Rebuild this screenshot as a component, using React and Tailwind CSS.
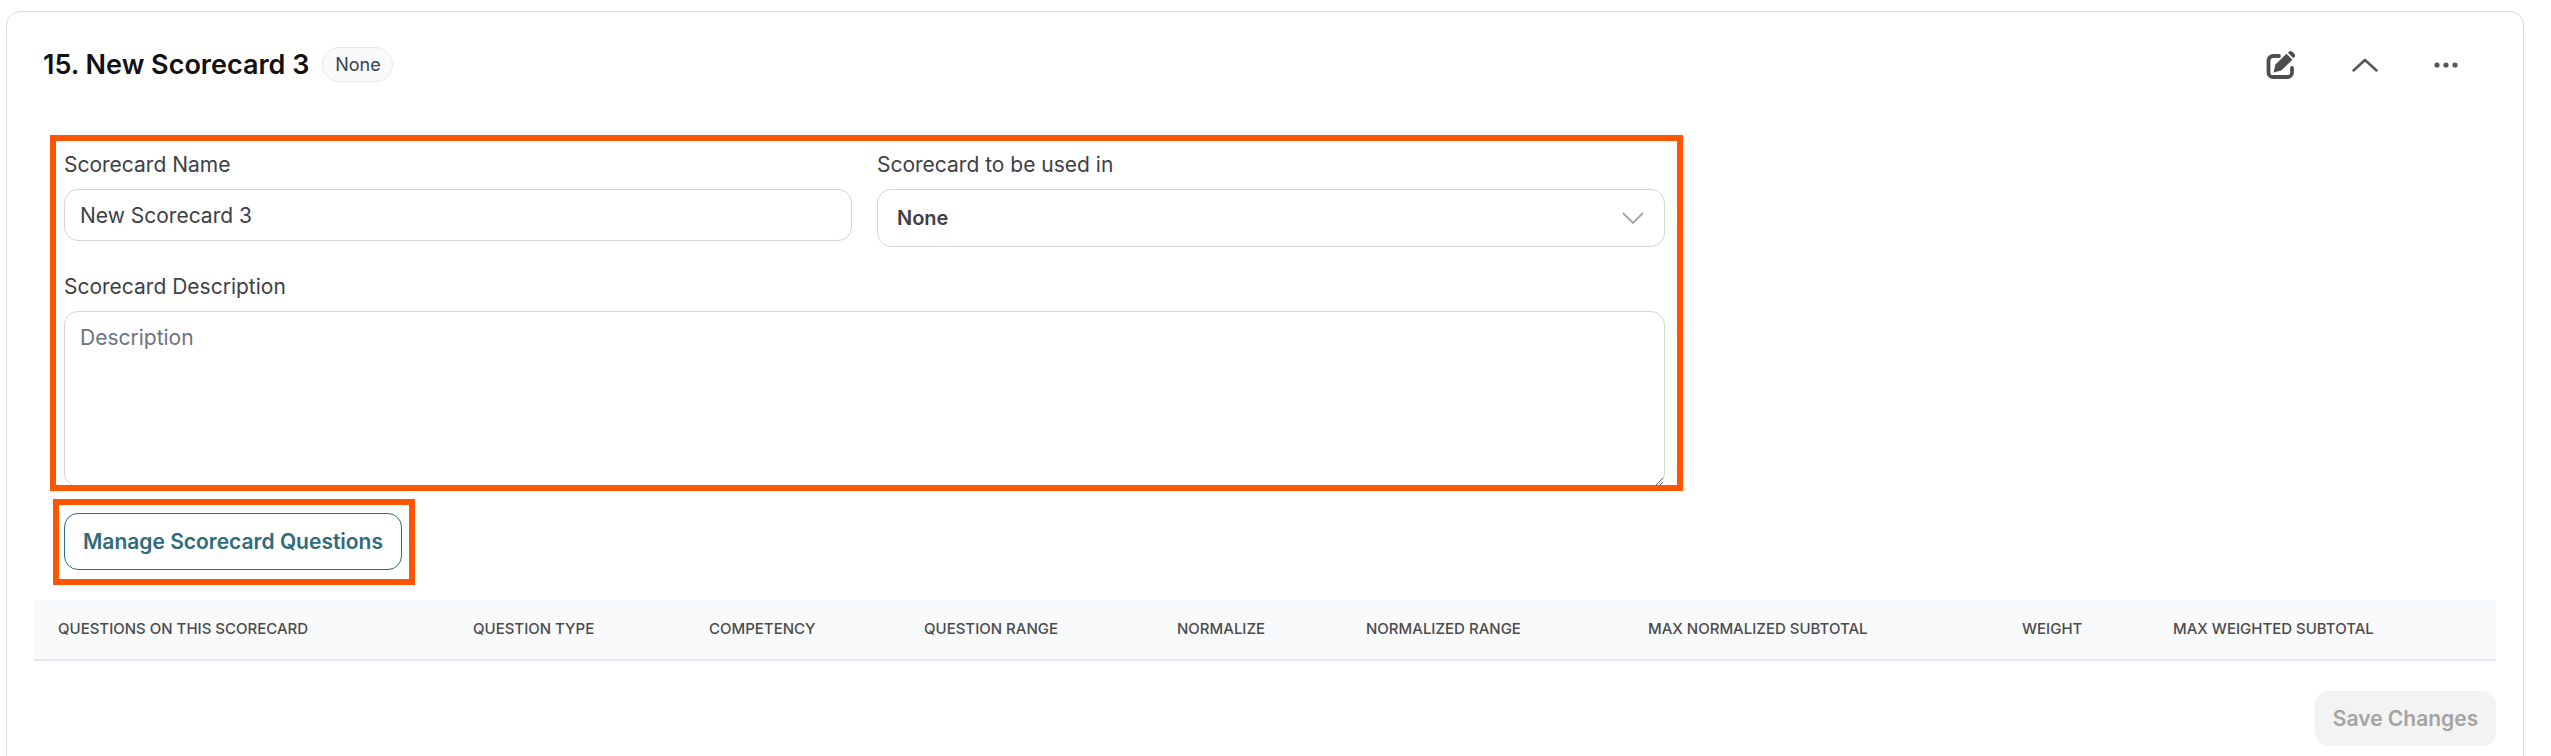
const columns = [
  { label: "Questions on this scorecard", width: "w-[415px]" },
  { label: "Question type", width: "w-[236px]" },
  { label: "Competency", width: "w-[215px]" },
  { label: "Question range", width: "w-[253px]" },
  { label: "Normalize", width: "w-[189px]" },
  { label: "Normalized range", width: "w-[282px]" },
  { label: "Max normalized subtotal", width: "w-[374px]" },
  { label: "Weight", width: "w-[151px]" },
  { label: "Max weighted subtotal", width: "w-[347px]" },
];

const EditIcon = () => (
  <svg viewBox="0 0 30 30" className="w-[30px] h-[30px] text-[#4d4d4d]">
    <path
      d="M13 6H7a4.5 4.5 0 0 0-4.5 4.5V22.5A4.5 4.5 0 0 0 7 27H21.5a4.5 4.5 0 0 0 4.5-4.5V18"
      fill="none"
      stroke="currentColor"
      strokeWidth="3.8"
      strokeLinecap="round"
    />
    <path d="M7.6 22.4L9.4 14.6L20.5 3.8L26.4 9.7L15.3 20.6Z" fill="currentColor" />
    <path
      d="M22 2.8L23.2 1.6a2 2 0 0 1 2.8 0l2.5 2.5a2 2 0 0 1 0 2.8L27.4 8.2Z"
      fill="currentColor"
    />
  </svg>
);

const ChevronUp = () => (
  <svg viewBox="0 0 26 14" className="w-[26px] h-[14px] text-[#555555]">
    <path
      d="M1.5 12.5L13 2L24.5 12.5"
      fill="none"
      stroke="currentColor"
      strokeWidth="2.5"
      strokeLinecap="round"
      strokeLinejoin="round"
    />
  </svg>
);

const Dots = () => (
  <svg viewBox="0 0 24 6" className="w-[24px] h-[6px] text-[#555555]">
    <circle cx="3" cy="3" r="2.6" fill="currentColor" />
    <circle cx="12" cy="3" r="2.6" fill="currentColor" />
    <circle cx="21" cy="3" r="2.6" fill="currentColor" />
  </svg>
);

const SelectChevron = () => (
  <svg viewBox="0 0 22 12" className="w-[22px] h-[12px] text-[#a3a3a3]">
    <path d="M1 1L11 11L21 1" fill="none" stroke="currentColor" strokeWidth="1.8" />
  </svg>
);

const App = () => {
  return (
    <div className="h-[756px] overflow-hidden bg-white font-['Inter',sans-serif]">
      <div className="relative ml-[6px] mt-[11px] h-[800px] w-[2518px] rounded-[14px] border border-[#dcdcdc] px-[27px]">
        <div className="flex h-[106px] items-center justify-between pb-[1px]">
          <div className="flex items-center pl-[9px]">
            <h2 className="text-[27px] font-semibold leading-8 text-[#111111]">15. New Scorecard 3</h2>
            <span className="ml-[13px] flex h-[35px] w-[71px] items-center justify-center rounded-full border border-[#e8e9ec] bg-[#f9fafb] text-[18px] text-[#374151]">
              None
            </span>
          </div>
          <div className="flex items-center gap-[56px] pr-[38px]">
            <EditIcon />
            <ChevronUp />
            <Dots />
          </div>
        </div>

        <div className="ml-[30px] w-[1601px]">
          <div className="grid grid-cols-2 gap-x-[25px]">
            <div>
              <label className="mb-[9px] mt-[32px] block text-[21px] leading-[30px] text-[#3f3f46]">Scorecard Name</label>
              <input
                readOnly
                value="New Scorecard 3"
                className="h-[52px] w-full rounded-[14px] border border-[#d4d4d8] px-[15px] text-[21px] text-[#3f3f46] outline-none"
              />
            </div>
            <div>
              <label className="mb-[9px] mt-[32px] block text-[21px] leading-[30px] text-[#3f3f46]">Scorecard to be used in</label>
              <div className="flex h-[58px] items-center justify-between rounded-[14px] border border-[#d4d4d8] pl-[19px] pr-[20px]">
                <span className="text-[20px] font-semibold text-[#3f3f46]">None</span>
                <SelectChevron />
              </div>
            </div>
          </div>
          <label className="mb-[9px] mt-[25px] block text-[21px] leading-[30px] text-[#3f3f46]">Scorecard Description</label>
          <textarea
            placeholder="Description"
            className="block h-[176px] w-full rounded-[14px] border border-[#d4d4d8] px-[15px] py-[10px] text-[21px] text-[#3f3f46] outline-none placeholder:text-[#6b7280]"
          />
          <button className="mt-[26px] flex h-[57px] w-[338px] items-center justify-center rounded-[14px] border border-[#2f6b7a] bg-white text-[21px] font-semibold text-[#2f6b7a]">
            Manage Scorecard Questions
          </button>
        </div>

        <table className="mt-[30px] w-[2462px] table-fixed border-collapse">
          <thead>
            <tr className="h-[60px] border-b-2 border-[#e5e7eb] bg-[#f9fafb]">
              {columns.map((col) => (
                <th
                  key={col.label}
                  className={`${col.width} pl-[24px] text-left text-[15px] font-medium uppercase text-[#4b4b4b]`}
                >
                  {col.label}
                </th>
              ))}
            </tr>
          </thead>
        </table>

        <div className="mt-[30px] flex justify-end">
          <button className="h-[55px] w-[181px] rounded-[14px] bg-[#f3f3f3] text-[21px] font-semibold text-[#a3a3a3]">
            Save Changes
          </button>
        </div>

        {/* orange review annotations drawn over the form */}
        <div className="pointer-events-none absolute left-[43px] top-[123px] h-[356px] w-[1633px] border-[6px] border-[#ff5500]" />
        <div className="pointer-events-none absolute left-[46px] top-[487px] h-[86px] w-[362px] border-[6px] border-[#ff5500]" />
      </div>
    </div>
  );
};

export default App;
